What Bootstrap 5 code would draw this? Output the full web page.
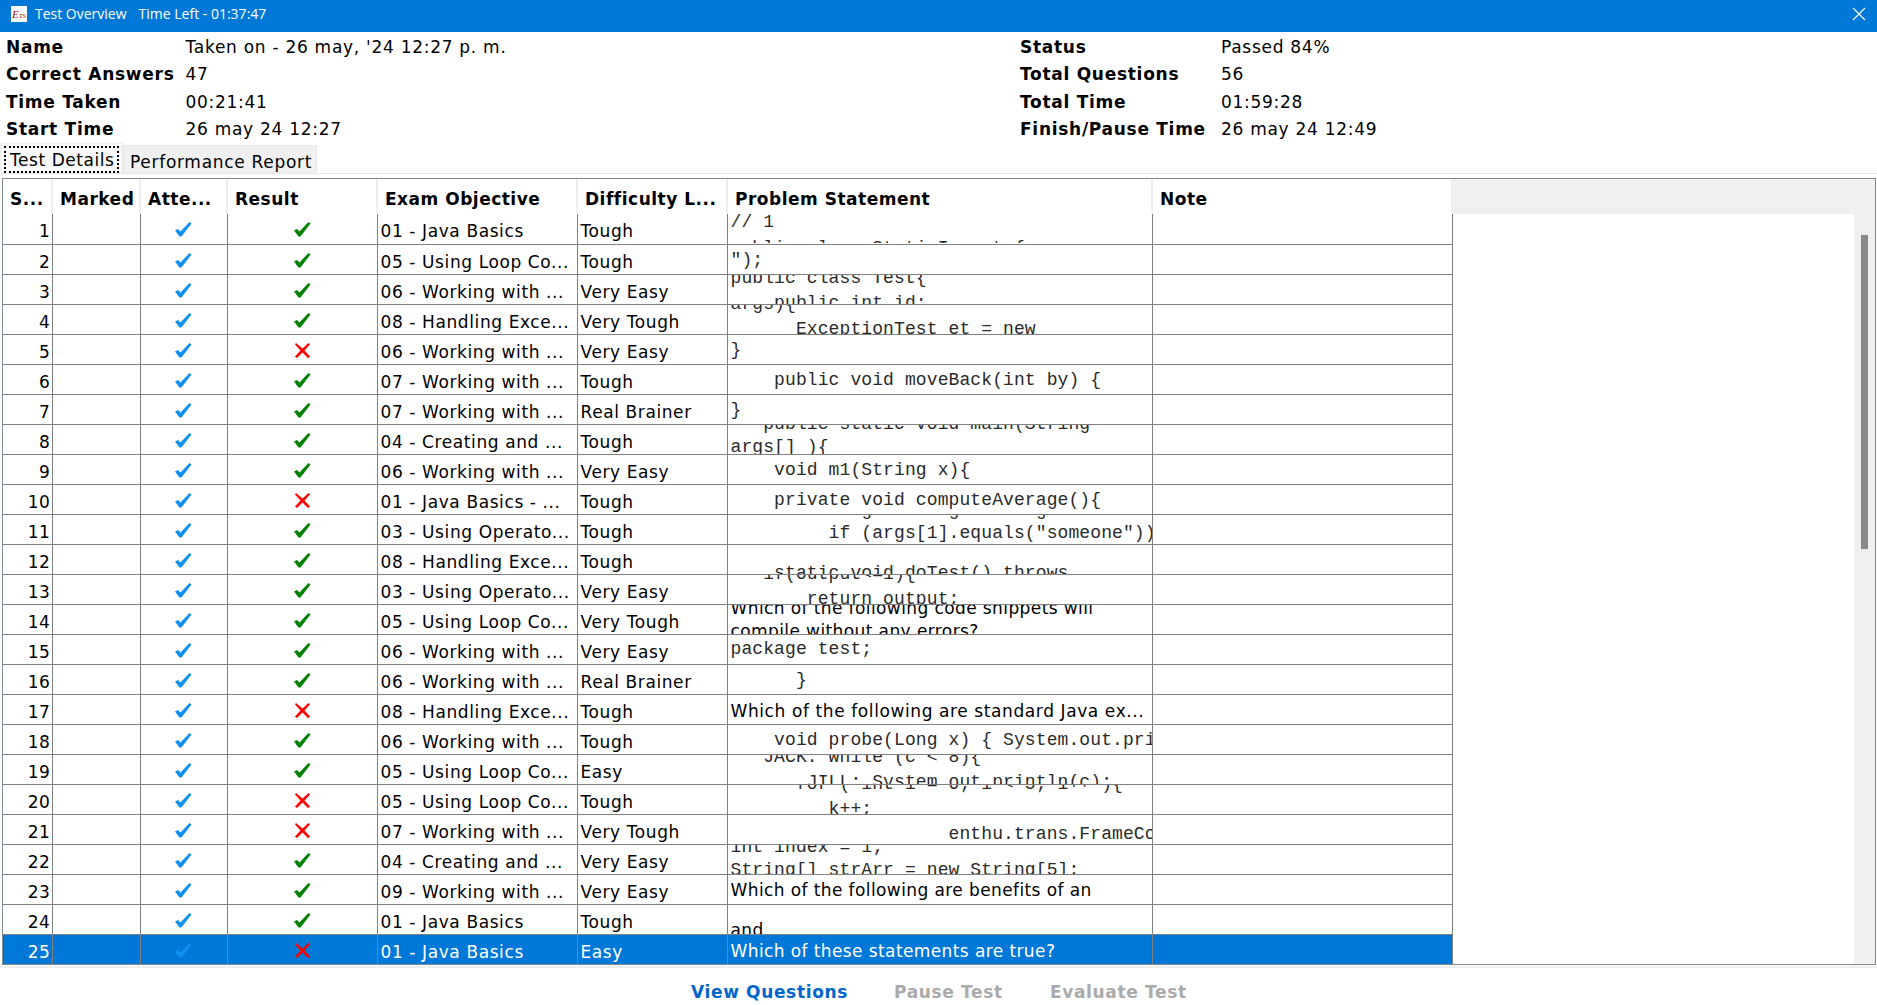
<!DOCTYPE html>
<html lang="en">
<head>
<meta charset="utf-8">
<title>Test Overview</title>
<link rel="stylesheet" href="https://cdn.jsdelivr.net/npm/bootstrap@5.3.0/dist/css/bootstrap.min.css">
<style>
html,body{height:100%;overflow:hidden}
body{background:#fff;color:#000;font-family:"DejaVu Sans",sans-serif;font-size:17px;letter-spacing:.6px;display:flex;flex-direction:column}
.titlebar{height:32px;background:#0078d7;color:#fff;font-family:"Open Sans",sans-serif;font-size:14px;letter-spacing:0;padding:0 0 5px 11px;flex:none}
.applogo{width:16px;height:16px;background:#fff;color:#a01010;font-family:"Liberation Serif",serif;font-style:italic;font-size:7px;line-height:16px;text-align:center;margin-right:8px;overflow:hidden;white-space:nowrap}
.applogo b{font-size:11px;font-weight:400}
.titlegap{margin-left:12px}
.closex{margin-left:auto;margin-right:11px}
.infogrid{display:grid;grid-template-columns:179.5px 834.5px 201px 1fr;grid-auto-rows:27.33px;padding:2px 0 0 6px;height:111px;flex:none;align-items:center;letter-spacing:.72px}
.lbl{font-weight:700}
.tabrow{height:31px;border-bottom:1px solid #e8e8e8;flex:none;align-items:flex-end}
.tabholder{width:123px;height:30px;background:#f8f8f8;padding:2px 3px 1px 3px;border:1px solid #eee;border-bottom:0}
.tabactive{height:27px;line-height:25px;border:2px dotted #000;padding-left:4px;white-space:nowrap;letter-spacing:.55px;overflow:hidden}
.tabitem{background:#f0f0f0;height:28px;line-height:33px;padding:0 5px 0 6px;border:1px solid #e8e8e8;border-bottom:0;width:194px;white-space:nowrap;letter-spacing:.7px;overflow:hidden}
.gridframe{margin:4px 1px 0 2px;height:787px;border:1px solid #808890;background:#f0f0f0;flex:none}
.headrow{height:35px;flex:none}
.datatable{table-layout:fixed;border-collapse:collapse;width:1449px;background:#fff}
.datatable td,.datatable th{padding:0;overflow:hidden}
.c1{width:49px}.c2{width:88px}.c3{width:87px}.c4{width:150px}.c5{width:200px}.c6{width:150px}.c7{width:425px}.c8{width:300px}
.headrow th{height:35px;font-weight:700;padding-left:7px;border-right:2px solid #eee;border-bottom:1px solid #eee;white-space:nowrap;letter-spacing:.5px;padding-top:7px}
.bodywrap{height:750px;background:#fff;flex:1 1 auto}
.rowsarea{flex:1 1 auto;background:#fff;overflow:hidden}
.datatable tbody td{height:30px;border-right:1px solid #808080;border-bottom:1px solid #808080;vertical-align:top}
.datatable tbody tr:last-child td{height:29px;border-bottom:0}
.cellbox{height:29px;overflow:hidden;white-space:nowrap;line-height:35px}
.numcell{text-align:right;padding-right:1px}
.txtcell{padding-left:3px}
.iconcell{display:flex;justify-content:center;padding-top:8px}
.probcell{padding-left:3px;line-height:23px;white-space:pre;letter-spacing:.4px}
.wideprob{letter-spacing:.6px}
.mono{font-family:"Liberation Mono",monospace;font-size:18px;letter-spacing:.1px;color:#2a2a2a}
.ln{display:block;height:23px;line-height:23px;white-space:pre}
.selrow td{background:#0078d7;color:#fff}
.tick{width:17px;height:15px}
.cross{width:15px;height:15px}
.trough{width:21px;background:#f0f0f0;flex:none;padding-top:21px}
.thumb{width:7px;height:314px;background:#888;margin-left:7px}
.actions{margin-top:1px;border-top:2px solid #eee;padding:12px 0 0 691px;height:39px;flex:none;font-weight:700;font-size:17px;align-items:center;letter-spacing:.65px}
.act-on{color:#0066cc;width:203px}
.act-off{color:#aaa;width:156px}
.up16{margin-top:-16px}.up12{margin-top:-12px}.up9{margin-top:-9px}.up8{margin-top:-8px}.up3{margin-top:-3px}
.dn2{margin-top:2px}.dn3{margin-top:3px}.dn4{margin-top:4px}.dn5{margin-top:5px}.dn8{margin-top:8px}.dn14{margin-top:14px}.dn17{margin-top:17px}
</style>
</head>
<body>
<svg width="0" height="0" class="position-absolute">
<symbol id="ic-tick" viewBox="0 0 17 15"><path d="M0 8.5 3 7 5.5 9.5 14.5 0 16.5 1.5 6.5 14.5 4.5 14.5Z"/></symbol>
<symbol id="ic-cross" viewBox="0 0 15 15"><path d="M1 0 7.5 5.5 13.5 0 15 1.5 9.5 7.5 15 13.5 13 15 7.5 9.5 2 15 0 13.5 5.5 7.5 0 1.5Z"/></symbol>
</svg>
<div class="titlebar d-flex align-items-center">
  <span class="applogo"><b>E</b>TS</span><span>Test Overview</span><span class="titlegap">Time Left - 01:37:47</span>
  <svg class="closex" width="14" height="14" viewBox="0 0 14 14"><path d="M1 1 13 13M13 1 1 13" stroke="#fff" stroke-width="1.1" fill="none"/></svg>
</div>
<div class="infogrid">
  <div class="lbl">Name</div><div>Taken on - 26 may, '24 12:27 p. m.</div><div class="lbl">Status</div><div>Passed 84%</div>
  <div class="lbl">Correct Answers</div><div>47</div><div class="lbl">Total Questions</div><div>56</div>
  <div class="lbl">Time Taken</div><div>00:21:41</div><div class="lbl">Total Time</div><div>01:59:28</div>
  <div class="lbl">Start Time</div><div>26 may 24 12:27</div><div class="lbl">Finish/Pause Time</div><div>26 may 24 12:49</div>
</div>
<div class="tabrow d-flex">
  <div class="tabholder"><div class="tabactive">Test Details</div></div><div class="tabitem">Performance Report</div>
</div>
<div class="gridframe d-flex flex-column">
  <div class="headrow">
    <table class="datatable"><colgroup><col class="c1"><col class="c2"><col class="c3"><col class="c4"><col class="c5"><col class="c6"><col class="c7"><col class="c8"></colgroup>
    <thead><tr><th>S...</th><th>Marked</th><th>Atte...</th><th>Result</th><th>Exam Objective</th><th>Difficulty L...</th><th>Problem Statement</th><th>Note</th></tr></thead></table>
  </div>
  <div class="bodywrap d-flex">
    <div class="rowsarea">
    <table class="datatable"><colgroup><col class="c1"><col class="c2"><col class="c3"><col class="c4"><col class="c5"><col class="c6"><col class="c7"><col class="c8"></colgroup>
    <tbody>
<tr><td><div class="cellbox numcell">1</div></td><td></td><td><div class="cellbox iconcell"><svg class="tick" fill="#1090f0"><use href="#ic-tick"/></svg></div></td><td><div class="cellbox iconcell"><svg class="tick" fill="#008000"><use href="#ic-tick"/></svg></div></td><td><div class="cellbox txtcell">01 - Java Basics</div></td><td><div class="cellbox txtcell">Tough</div></td><td><div class="cellbox probcell mono"><span class="ln up3">// 1</span><span class="ln dn3">public class StaticImport {</span></div></td><td></td></tr>
<tr><td><div class="cellbox numcell">2</div></td><td></td><td><div class="cellbox iconcell"><svg class="tick" fill="#1090f0"><use href="#ic-tick"/></svg></div></td><td><div class="cellbox iconcell"><svg class="tick" fill="#008000"><use href="#ic-tick"/></svg></div></td><td><div class="cellbox txtcell">05 - Using Loop Co...</div></td><td><div class="cellbox txtcell">Tough</div></td><td><div class="cellbox probcell mono"><span class="ln dn4">");</span></div></td><td></td></tr>
<tr><td><div class="cellbox numcell">3</div></td><td></td><td><div class="cellbox iconcell"><svg class="tick" fill="#1090f0"><use href="#ic-tick"/></svg></div></td><td><div class="cellbox iconcell"><svg class="tick" fill="#008000"><use href="#ic-tick"/></svg></div></td><td><div class="cellbox txtcell">06 - Working with ...</div></td><td><div class="cellbox txtcell">Very Easy</div></td><td><div class="cellbox probcell mono"><span class="ln up8">public class Test{</span><span class="ln dn2">    public int id;</span></div></td><td></td></tr>
<tr><td><div class="cellbox numcell">4</div></td><td></td><td><div class="cellbox iconcell"><svg class="tick" fill="#1090f0"><use href="#ic-tick"/></svg></div></td><td><div class="cellbox iconcell"><svg class="tick" fill="#008000"><use href="#ic-tick"/></svg></div></td><td><div class="cellbox txtcell">08 - Handling Exce...</div></td><td><div class="cellbox txtcell">Very Tough</div></td><td><div class="cellbox probcell mono"><span class="ln up12">args){</span><span class="ln dn2">      ExceptionTest et = new</span></div></td><td></td></tr>
<tr><td><div class="cellbox numcell">5</div></td><td></td><td><div class="cellbox iconcell"><svg class="tick" fill="#1090f0"><use href="#ic-tick"/></svg></div></td><td><div class="cellbox iconcell"><svg class="cross" fill="#f00"><use href="#ic-cross"/></svg></div></td><td><div class="cellbox txtcell">06 - Working with ...</div></td><td><div class="cellbox txtcell">Very Easy</div></td><td><div class="cellbox probcell mono"><span class="ln dn4">}</span></div></td><td></td></tr>
<tr><td><div class="cellbox numcell">6</div></td><td></td><td><div class="cellbox iconcell"><svg class="tick" fill="#1090f0"><use href="#ic-tick"/></svg></div></td><td><div class="cellbox iconcell"><svg class="tick" fill="#008000"><use href="#ic-tick"/></svg></div></td><td><div class="cellbox txtcell">07 - Working with ...</div></td><td><div class="cellbox txtcell">Tough</div></td><td><div class="cellbox probcell mono"><span class="ln dn4">    public void moveBack(int by) {</span></div></td><td></td></tr>
<tr><td><div class="cellbox numcell">7</div></td><td></td><td><div class="cellbox iconcell"><svg class="tick" fill="#1090f0"><use href="#ic-tick"/></svg></div></td><td><div class="cellbox iconcell"><svg class="tick" fill="#008000"><use href="#ic-tick"/></svg></div></td><td><div class="cellbox txtcell">07 - Working with ...</div></td><td><div class="cellbox txtcell">Real Brainer</div></td><td><div class="cellbox probcell mono"><span class="ln dn4">}</span></div></td><td></td></tr>
<tr><td><div class="cellbox numcell">8</div></td><td></td><td><div class="cellbox iconcell"><svg class="tick" fill="#1090f0"><use href="#ic-tick"/></svg></div></td><td><div class="cellbox iconcell"><svg class="tick" fill="#008000"><use href="#ic-tick"/></svg></div></td><td><div class="cellbox txtcell">04 - Creating and ...</div></td><td><div class="cellbox txtcell">Tough</div></td><td><div class="cellbox probcell mono"><span class="ln up12">   public static void main(String</span><span class="ln">args[] ){</span></div></td><td></td></tr>
<tr><td><div class="cellbox numcell">9</div></td><td></td><td><div class="cellbox iconcell"><svg class="tick" fill="#1090f0"><use href="#ic-tick"/></svg></div></td><td><div class="cellbox iconcell"><svg class="tick" fill="#008000"><use href="#ic-tick"/></svg></div></td><td><div class="cellbox txtcell">06 - Working with ...</div></td><td><div class="cellbox txtcell">Very Easy</div></td><td><div class="cellbox probcell mono"><span class="ln dn4">    void m1(String x){</span></div></td><td></td></tr>
<tr><td><div class="cellbox numcell">10</div></td><td></td><td><div class="cellbox iconcell"><svg class="tick" fill="#1090f0"><use href="#ic-tick"/></svg></div></td><td><div class="cellbox iconcell"><svg class="cross" fill="#f00"><use href="#ic-cross"/></svg></div></td><td><div class="cellbox txtcell">01 - Java Basics - ...</div></td><td><div class="cellbox txtcell">Tough</div></td><td><div class="cellbox probcell mono"><span class="ln dn4">    private void computeAverage(){</span></div></td><td></td></tr>
<tr><td><div class="cellbox numcell">11</div></td><td></td><td><div class="cellbox iconcell"><svg class="tick" fill="#1090f0"><use href="#ic-tick"/></svg></div></td><td><div class="cellbox iconcell"><svg class="tick" fill="#008000"><use href="#ic-tick"/></svg></div></td><td><div class="cellbox txtcell">03 - Using Operato...</div></td><td><div class="cellbox txtcell">Tough</div></td><td><div class="cellbox probcell mono"><span class="ln up16">            g       g       g</span><span class="ln">         if (args[1].equals("someone")){</span></div></td><td></td></tr>
<tr><td><div class="cellbox numcell">12</div></td><td></td><td><div class="cellbox iconcell"><svg class="tick" fill="#1090f0"><use href="#ic-tick"/></svg></div></td><td><div class="cellbox iconcell"><svg class="tick" fill="#008000"><use href="#ic-tick"/></svg></div></td><td><div class="cellbox txtcell">08 - Handling Exce...</div></td><td><div class="cellbox txtcell">Tough</div></td><td><div class="cellbox probcell mono"><span class="ln dn17">    static void doTest() throws</span></div></td><td></td></tr>
<tr><td><div class="cellbox numcell">13</div></td><td></td><td><div class="cellbox iconcell"><svg class="tick" fill="#1090f0"><use href="#ic-tick"/></svg></div></td><td><div class="cellbox iconcell"><svg class="tick" fill="#008000"><use href="#ic-tick"/></svg></div></td><td><div class="cellbox txtcell">03 - Using Operato...</div></td><td><div class="cellbox txtcell">Very Easy</div></td><td><div class="cellbox probcell mono"><span class="ln up12">   if(output&lt;=1){</span><span class="ln dn2">       return output;</span></div></td><td></td></tr>
<tr><td><div class="cellbox numcell">14</div></td><td></td><td><div class="cellbox iconcell"><svg class="tick" fill="#1090f0"><use href="#ic-tick"/></svg></div></td><td><div class="cellbox iconcell"><svg class="tick" fill="#008000"><use href="#ic-tick"/></svg></div></td><td><div class="cellbox txtcell">05 - Using Loop Co...</div></td><td><div class="cellbox txtcell">Very Tough</div></td><td><div class="cellbox probcell"><span class="ln up8">Which of the following code snippets will</span><span class="ln">compile without any errors?</span></div></td><td></td></tr>
<tr><td><div class="cellbox numcell">15</div></td><td></td><td><div class="cellbox iconcell"><svg class="tick" fill="#1090f0"><use href="#ic-tick"/></svg></div></td><td><div class="cellbox iconcell"><svg class="tick" fill="#008000"><use href="#ic-tick"/></svg></div></td><td><div class="cellbox txtcell">06 - Working with ...</div></td><td><div class="cellbox txtcell">Very Easy</div></td><td><div class="cellbox probcell mono"><span class="ln dn3">package test;</span></div></td><td></td></tr>
<tr><td><div class="cellbox numcell">16</div></td><td></td><td><div class="cellbox iconcell"><svg class="tick" fill="#1090f0"><use href="#ic-tick"/></svg></div></td><td><div class="cellbox iconcell"><svg class="tick" fill="#008000"><use href="#ic-tick"/></svg></div></td><td><div class="cellbox txtcell">06 - Working with ...</div></td><td><div class="cellbox txtcell">Real Brainer</div></td><td><div class="cellbox probcell mono"><span class="ln dn4">      }</span></div></td><td></td></tr>
<tr><td><div class="cellbox numcell">17</div></td><td></td><td><div class="cellbox iconcell"><svg class="tick" fill="#1090f0"><use href="#ic-tick"/></svg></div></td><td><div class="cellbox iconcell"><svg class="cross" fill="#f00"><use href="#ic-cross"/></svg></div></td><td><div class="cellbox txtcell">08 - Handling Exce...</div></td><td><div class="cellbox txtcell">Tough</div></td><td><div class="cellbox probcell wideprob"><span class="ln dn5">Which of the following are standard Java ex...</span></div></td><td></td></tr>
<tr><td><div class="cellbox numcell">18</div></td><td></td><td><div class="cellbox iconcell"><svg class="tick" fill="#1090f0"><use href="#ic-tick"/></svg></div></td><td><div class="cellbox iconcell"><svg class="tick" fill="#008000"><use href="#ic-tick"/></svg></div></td><td><div class="cellbox txtcell">06 - Working with ...</div></td><td><div class="cellbox txtcell">Tough</div></td><td><div class="cellbox probcell mono"><span class="ln dn4">    void probe(Long x) { System.out.println(x); }</span></div></td><td></td></tr>
<tr><td><div class="cellbox numcell">19</div></td><td></td><td><div class="cellbox iconcell"><svg class="tick" fill="#1090f0"><use href="#ic-tick"/></svg></div></td><td><div class="cellbox iconcell"><svg class="tick" fill="#008000"><use href="#ic-tick"/></svg></div></td><td><div class="cellbox txtcell">05 - Using Loop Co...</div></td><td><div class="cellbox txtcell">Easy</div></td><td><div class="cellbox probcell mono"><span class="ln up9">   JACK: while (c &lt; 8){</span><span class="ln dn2">       JILL: System.out.println(c);</span></div></td><td></td></tr>
<tr><td><div class="cellbox numcell">20</div></td><td></td><td><div class="cellbox iconcell"><svg class="tick" fill="#1090f0"><use href="#ic-tick"/></svg></div></td><td><div class="cellbox iconcell"><svg class="cross" fill="#f00"><use href="#ic-cross"/></svg></div></td><td><div class="cellbox txtcell">05 - Using Loop Co...</div></td><td><div class="cellbox txtcell">Tough</div></td><td><div class="cellbox probcell mono"><span class="ln up12">      for ( int i = 0; i &lt; 5; i++ ){</span><span class="ln dn2">         k++;</span></div></td><td></td></tr>
<tr><td><div class="cellbox numcell">21</div></td><td></td><td><div class="cellbox iconcell"><svg class="tick" fill="#1090f0"><use href="#ic-tick"/></svg></div></td><td><div class="cellbox iconcell"><svg class="cross" fill="#f00"><use href="#ic-cross"/></svg></div></td><td><div class="cellbox txtcell">07 - Working with ...</div></td><td><div class="cellbox txtcell">Very Tough</div></td><td><div class="cellbox probcell mono"><span class="ln dn8">                    enthu.trans.FrameComponent</span></div></td><td></td></tr>
<tr><td><div class="cellbox numcell">22</div></td><td></td><td><div class="cellbox iconcell"><svg class="tick" fill="#1090f0"><use href="#ic-tick"/></svg></div></td><td><div class="cellbox iconcell"><svg class="tick" fill="#008000"><use href="#ic-tick"/></svg></div></td><td><div class="cellbox txtcell">04 - Creating and ...</div></td><td><div class="cellbox txtcell">Very Easy</div></td><td><div class="cellbox probcell mono"><span class="ln up9">int index = 1;</span><span class="ln">String[] strArr = new String[5];</span></div></td><td></td></tr>
<tr><td><div class="cellbox numcell">23</div></td><td></td><td><div class="cellbox iconcell"><svg class="tick" fill="#1090f0"><use href="#ic-tick"/></svg></div></td><td><div class="cellbox iconcell"><svg class="tick" fill="#008000"><use href="#ic-tick"/></svg></div></td><td><div class="cellbox txtcell">09 - Working with ...</div></td><td><div class="cellbox txtcell">Very Easy</div></td><td><div class="cellbox probcell"><span class="ln dn4">Which of the following are benefits of an</span></div></td><td></td></tr>
<tr><td><div class="cellbox numcell">24</div></td><td></td><td><div class="cellbox iconcell"><svg class="tick" fill="#1090f0"><use href="#ic-tick"/></svg></div></td><td><div class="cellbox iconcell"><svg class="tick" fill="#008000"><use href="#ic-tick"/></svg></div></td><td><div class="cellbox txtcell">01 - Java Basics</div></td><td><div class="cellbox txtcell">Tough</div></td><td><div class="cellbox probcell"><span class="ln dn14">and</span></div></td><td></td></tr>
<tr class="selrow"><td><div class="cellbox numcell">25</div></td><td></td><td><div class="cellbox iconcell"><svg class="tick" fill="#1090f0"><use href="#ic-tick"/></svg></div></td><td><div class="cellbox iconcell"><svg class="cross" fill="#f00"><use href="#ic-cross"/></svg></div></td><td><div class="cellbox txtcell">01 - Java Basics</div></td><td><div class="cellbox txtcell">Easy</div></td><td><div class="cellbox probcell"><span class="ln dn5">Which of these statements are true?</span></div></td><td></td></tr>
    </tbody></table>
    </div>
    <div class="trough"><div class="thumb"></div></div>
  </div>
</div>
<div class="actions d-flex">
  <div class="act-on">View Questions</div><div class="act-off">Pause Test</div><div class="act-off">Evaluate Test</div>
</div>
<script src="https://cdn.jsdelivr.net/npm/bootstrap@5.3.0/dist/js/bootstrap.bundle.min.js"></script>
</body>
</html>
